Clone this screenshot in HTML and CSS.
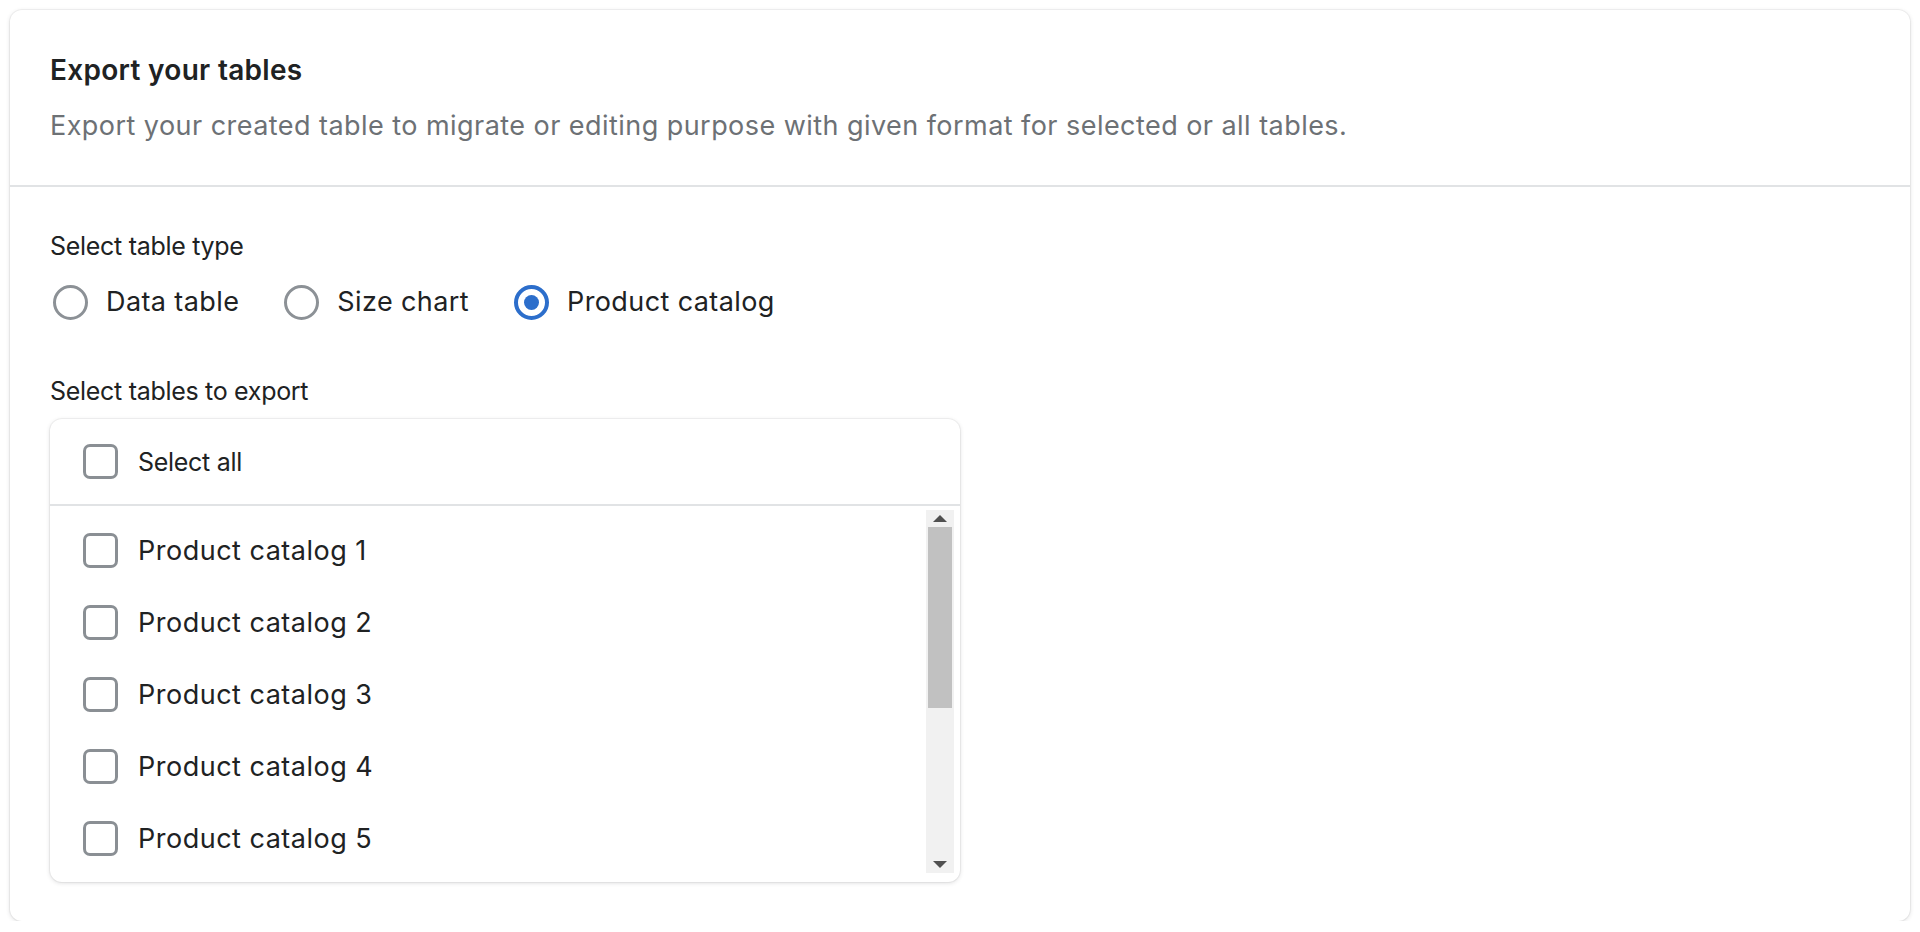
FILE: index.html
```html
<!DOCTYPE html>
<html>
<head>
    <meta name="viewport" content="width=device-width, initial-scale=1.0">
    <title>Export your tables</title>
    <link rel="stylesheet" href="styles.css">
</head>
<body>
    <div class="card">
        <div class="card-header">
            <h2 class="card-title">Export your tables</h2>
            <p class="card-subtitle">Export your created table to migrate or editing purpose with given format for selected or all tables.</p>
        </div>
        <div class="card-body">
            <p class="field-label">Select table type</p>
            <div class="radio-group">
                <label class="radio"><span class="radio-mark"></span>Data table</label>
                <label class="radio"><span class="radio-mark"></span>Size chart</label>
                <label class="radio checked"><span class="radio-mark"></span>Product catalog</label>
            </div>
            <p class="field-label tables-label">Select tables to export</p>
            <div class="listbox">
                <div class="listbox-header">
                    <label class="check"><span class="check-mark"></span><span class="select-all">Select all</span></label>
                </div>
                <div class="listbox-body">
                    <div class="items">
                        <label class="check item"><span class="check-mark"></span>Product catalog 1</label>
                        <label class="check item"><span class="check-mark"></span>Product catalog 2</label>
                        <label class="check item"><span class="check-mark"></span>Product catalog 3</label>
                        <label class="check item"><span class="check-mark"></span>Product catalog 4</label>
                        <label class="check item"><span class="check-mark"></span>Product catalog 5</label>
                    </div>
                    <div class="scrollbar">
                        <div class="scroll-btn up"></div>
                        <div class="scroll-thumb"></div>
                        <div class="scroll-track"></div>
                        <div class="scroll-btn down"></div>
                    </div>
                </div>
            </div>
        </div>
    </div>
</body>
</html>
```

FILE: styles.css
```css
body {
    margin: 0;
    padding: 10px 10px 0 10px;
    background-color: #ffffff;
    font-family: Inter, "Noto Sans", sans-serif;
    color: #202223;
}
.card {
    width: 1900px;
    background-color: #ffffff;
    border-radius: 12px;
    box-shadow: 0 0 0 1px rgba(63, 63, 68, 0.05), 0 1px 4px rgba(63, 63, 68, 0.18);
}
.card-header {
    padding: 44px 40px 43px 40px;
    border-bottom: 2px solid #e1e3e5;
}
.card-title {
    margin: 0;
    font-size: 28px;
    line-height: 32px;
    font-weight: 600;
    letter-spacing: 0.3px;
}
.card-subtitle {
    margin: 24px 0 0 0;
    font-size: 27px;
    line-height: 32px;
    color: #6d7175;
    letter-spacing: 0.45px;
}
.card-body {
    padding: 44px 40px 39px 40px;
}
.field-label {
    margin: 0;
    font-size: 25px;
    line-height: 30px;
    letter-spacing: -0.3px;
}
.radio-group {
    display: flex;
    gap: 45px;
    margin-top: 23px;
    padding-left: 3px;
}
.radio {
    display: flex;
    align-items: center;
    gap: 18px;
    font-size: 27px;
    line-height: 36px;
    letter-spacing: 0.4px;
}
.radio-mark {
    width: 35px;
    height: 35px;
    box-sizing: border-box;
    border: 3px solid #8c9196;
    border-radius: 50%;
    display: flex;
    align-items: center;
    justify-content: center;
}
.checked .radio-mark {
    border: 4px solid #2c6ecb;
}
.checked .radio-mark::after {
    content: "";
    width: 15px;
    height: 15px;
    border-radius: 50%;
    background-color: #2c6ecb;
}
.tables-label {
    margin-top: 56px;
}
.listbox {
    width: 910px;
    margin-top: 13px;
    border-radius: 12px;
    box-shadow: 0 0 0 1px rgba(63, 63, 68, 0.05), 0 1px 4px rgba(63, 63, 68, 0.18);
}
.listbox-header {
    height: 85px;
    padding-left: 33px;
    display: flex;
    align-items: center;
    border-bottom: 2px solid #e1e3e5;
}
.check {
    display: flex;
    align-items: center;
    gap: 20px;
}
.check-mark {
    width: 35px;
    height: 35px;
    box-sizing: border-box;
    border: 3px solid #8a8f94;
    border-radius: 7px;
    flex-shrink: 0;
}
.select-all {
    font-size: 25px;
    letter-spacing: -0.3px;
}
.listbox-body {
    display: flex;
    height: 376px;
}
.items {
    flex: 1;
    padding: 8px 0 0 33px;
}
.item {
    height: 72px;
    font-size: 27px;
    letter-spacing: 0.5px;
}
.scrollbar {
    width: 28px;
    margin: 4px 6px 9px 0;
    background-color: #f1f1f1;
    display: flex;
    flex-direction: column;
    align-items: center;
}
.scroll-btn {
    height: 17px;
    width: 100%;
    display: flex;
    align-items: center;
    justify-content: center;
}
.scroll-btn::after {
    content: "";
    width: 0;
    height: 0;
    border-left: 7px solid transparent;
    border-right: 7px solid transparent;
}
.up::after {
    border-bottom: 7px solid #505050;
}
.down::after {
    border-top: 7px solid #505050;
}
.scroll-thumb {
    width: 24px;
    height: 181px;
    background-color: #c1c1c1;
}
.scroll-track {
    flex: 1;
}
```
